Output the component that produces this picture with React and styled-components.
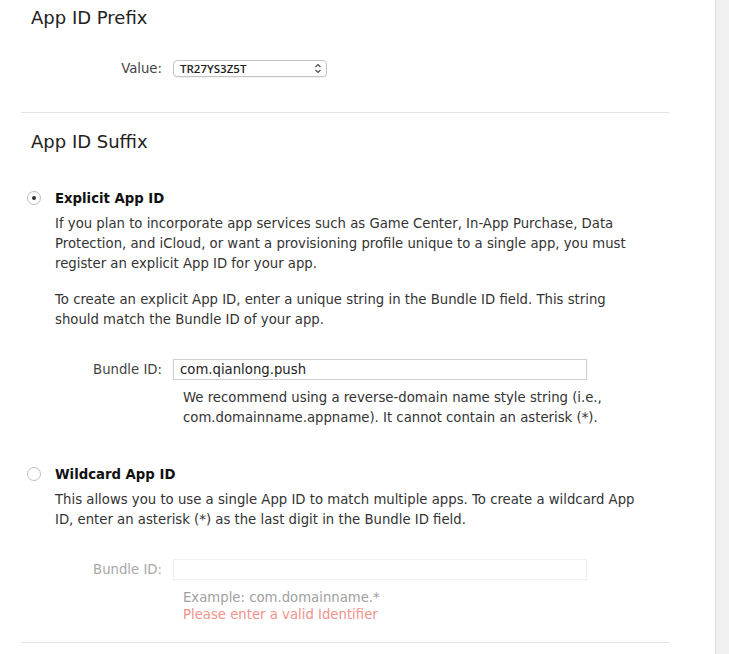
import React from 'react';
import styled, { createGlobalStyle } from 'styled-components';

const GlobalStyle = createGlobalStyle`
  html, body {
    margin: 0;
    padding: 0;
    background: #fff;
    overflow: hidden;
  }
  body {
    font-family: "DejaVu Sans", "Open Sans", sans-serif;
    color: #333;
  }
`;

const Page = styled.div`
  display: flex;
  height: 654px;
`;

const Main = styled.div`
  width: 716px;
  padding-left: 21px;
  box-sizing: border-box;
`;

const Content = styled.div`
  width: 648px;
`;

const Scrollbar = styled.div`
  width: 13px;
  background: #f0f0f0;
  border-left: 1px solid #e2e2e2;
`;

const Section = styled.section`
  border-bottom: 1px solid #e5e5e5;
  padding-bottom: ${p => p.$bottom}px;
`;

const Heading = styled.h2`
  margin: ${p => p.$top}px 0 0 10px;
  font-size: 18px;
  font-weight: normal;
  line-height: 24px;
  color: #222;
`;

const FieldRow = styled.div`
  display: flex;
  align-items: center;
  margin-top: ${p => p.$top}px;
`;

const Label = styled.label`
  width: 141px;
  text-align: right;
  font-size: 13.25px;
  color: ${p => (p.$disabled ? '#a8a8a8' : '#444')};
  margin-right: 11px;
`;

const Select = styled.div`
  width: 154px;
  height: 17px;
  box-sizing: border-box;
  border: 1px solid #c4c4c4;
  border-radius: 4px;
  display: flex;
  align-items: center;
  justify-content: space-between;
  padding: 0 4px 0 6px;
  font-family: "Open Sans", "DejaVu Sans", sans-serif;
  font-size: 11.5px;
  font-weight: 600;
  color: #1e1e1e;
  box-shadow: 0 1px 0 rgba(0, 0, 0, 0.05);
`;

const TextInput = styled.div`
  width: 414px;
  height: 21px;
  box-sizing: border-box;
  border: 1px solid ${p => (p.$disabled ? '#efefef' : '#cfcfcf')};
  padding: 0 6px;
  font-size: 13.25px;
  line-height: 19px;
  color: #222;
`;

const Option = styled.div`
  margin-top: ${p => p.$top}px;
`;

const OptionHead = styled.div`
  display: flex;
  align-items: center;
  height: 20px;
  padding-left: 6px;
`;

const Radio = styled.span`
  width: 14px;
  height: 14px;
  border-radius: 50%;
  border: 1px solid #bdbdbd;
  box-sizing: border-box;
  display: flex;
  align-items: center;
  justify-content: center;
  margin-right: 14px;
  &::after {
    content: '';
    width: 4px;
    height: 4px;
    border-radius: 50%;
    background: ${p => (p.$checked ? '#333' : 'transparent')};
  }
`;

const OptionTitle = styled.span`
  font-size: 13.25px;
  font-weight: bold;
  color: #111;
`;

const Body = styled.div`
  margin-left: 34px;
  width: 592px;
`;

const Para = styled.p`
  margin: ${p => p.$top}px 0 0;
  font-size: 13.25px;
  line-height: 20px;
  color: #333;
`;

const Help = styled.div`
  margin: ${p => p.$top}px 0 0 162px;
  font-size: 13.25px;
  line-height: ${p => p.$lh}px;
  color: ${p => (p.$muted ? '#a0a0a0' : '#333')};
`;

const ErrorText = styled.div`
  color: #f3928a;
`;

const Chevrons = () => (
  <svg width="8" height="11" viewBox="0 0 8 11" fill="none" stroke="#444" strokeWidth="1.1">
    <path d="M1.5 4 L4 1.5 L6.5 4" />
    <path d="M1.5 7 L4 9.5 L6.5 7" />
  </svg>
);

export default function App() {
  return (
    <>
      <GlobalStyle />
      <Page>
        <Main>
          <Content>
            <Section $bottom={35}>
              <Heading $top={6}>App ID Prefix</Heading>
              <FieldRow $top={30}>
                <Label>Value:</Label>
                <Select>
                  <span>TR27YS3Z5T</span>
                  <Chevrons />
                </Select>
              </FieldRow>
            </Section>

            <Section $bottom={19}>
              <Heading $top={17}>App ID Suffix</Heading>

              <Option $top={34}>
                <OptionHead>
                  <Radio $checked />
                  <OptionTitle>Explicit App ID</OptionTitle>
                </OptionHead>
                <Body>
                  <Para $top={6}>
                    If you plan to incorporate app services such as Game Center, In-App Purchase, Data
                    Protection, and iCloud, or want a provisioning profile unique to a single app, you must
                    register an explicit App ID for your app.
                  </Para>
                  <Para $top={16}>
                    To create an explicit App ID, enter a unique string in the Bundle ID field. This string
                    should match the Bundle ID of your app.
                  </Para>
                </Body>
                <FieldRow $top={29}>
                  <Label>Bundle ID:</Label>
                  <TextInput>com.qianlong.push</TextInput>
                </FieldRow>
                <Help $top={8} $lh={20}>
                  We recommend using a reverse-domain name style string (i.e.,
                  <br />
                  com.domainname.appname). It cannot contain an asterisk (*).
                </Help>
              </Option>

              <Option $top={36}>
                <OptionHead>
                  <Radio />
                  <OptionTitle>Wildcard App ID</OptionTitle>
                </OptionHead>
                <Body>
                  <Para $top={6}>
                    This allows you to use a single App ID to match multiple apps. To create a wildcard App
                    ID, enter an asterisk (*) as the last digit in the Bundle ID field.
                  </Para>
                </Body>
                <FieldRow $top={29}>
                  <Label $disabled>Bundle ID:</Label>
                  <TextInput $disabled />
                </FieldRow>
                <Help $top={9} $lh={17} $muted>
                  Example: com.domainname.*
                  <ErrorText>Please enter a valid Identifier</ErrorText>
                </Help>
              </Option>
            </Section>
          </Content>
        </Main>
        <Scrollbar />
      </Page>
    </>
  );
}
